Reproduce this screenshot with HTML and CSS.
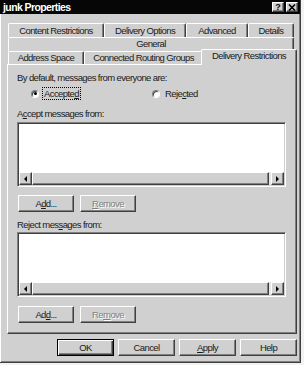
FILE: index.html
```html
<!DOCTYPE html>
<html>
<head>
<meta charset="utf-8">
<title>junk Properties</title>
<link rel="stylesheet" href="styles.css">
</head>
<body>
<div class="win">
  <div class="titlebar">
    <span class="title">junk Properties</span>
    <div class="tbtns">
      <span class="tbtn">?</span>
      <span class="tbtn">
        <svg width="8" height="7" viewBox="0 0 8 7"><path d="M1 0.5 L7 6.5 M7 0.5 L1 6.5" stroke="#000" stroke-width="1.6"/></svg>
      </span>
    </div>
  </div>
  <div class="frame">
    <div class="tabs">
      <div class="row row1">
        <div class="tab t-cr">Content Restrictions</div>
        <div class="tab t-do">Delivery Options</div>
        <div class="tab t-adv">Advanced</div>
        <div class="tab t-det">Details</div>
      </div>
      <div class="row row2">
        <div class="tab t-gen">General</div>
      </div>
      <div class="row row3">
        <div class="tab t-as">Address Space</div>
        <div class="tab t-crg">Connected Routing Groups</div>
        <div class="tab sel t-dr">Delivery Restrictions</div>
      </div>
    </div>
    <div class="panel">
      <div class="lbl l1">By default, messages from everyone are:</div>
      <div class="radios">
        <div class="radio first"><span class="rb on"></span><span class="rtext focus">Accepte<u>d</u></span></div>
        <div class="radio"><span class="rb"></span><span class="rtext">Reje<u>c</u>ted</span></div>
      </div>
      <div class="lbl l2">A<u>c</u>cept messages from:</div>
      <div class="list">
        <div class="list-body"></div>
        <div class="hscroll">
          <span class="sbtn"><span class="arr left"></span></span>
          <span class="thumb"></span>
          <span class="sbtn"><span class="arr right"></span></span>
        </div>
      </div>
      <div class="btnrow br1">
        <span class="btn small">A<u>d</u>d...</span>
        <span class="btn small disabled"><u>R</u>emove</span>
      </div>
      <div class="lbl l3">Reject mes<u>s</u>ages from:</div>
      <div class="list l-2">
        <div class="list-body"></div>
        <div class="hscroll">
          <span class="sbtn"><span class="arr left"></span></span>
          <span class="thumb"></span>
          <span class="sbtn"><span class="arr right"></span></span>
        </div>
      </div>
      <div class="btnrow br2">
        <span class="btn small">Ad<u>d</u>...</span>
        <span class="btn small disabled">Re<u>m</u>ove</span>
      </div>
    </div>
    <div class="footer">
      <span class="btn big default">OK</span>
      <span class="btn big">Cancel</span>
      <span class="btn big"><u>A</u>pply</span>
      <span class="btn big">Help</span>
    </div>
  </div>
</div>
</body>
</html>
```

FILE: styles.css
```css
* { box-sizing: border-box; }
html, body { margin: 0; padding: 0; }
body {
  width: 304px;
  height: 365px;
  overflow: hidden;
  background: #f2f2f2;
  font-family: "Liberation Sans", Arial, sans-serif;
  font-size: 9.5px;
  letter-spacing: -0.6px;
  color: #1a1a1a;
}
u { text-decoration: underline; text-underline-offset: 1px; }

.win {
  width: 301px;
  height: 363px;
  background: #d0d0d0;
  border-right: 1px solid #404040;
  border-bottom: 1px solid #404040;
  box-shadow: inset -1px -1px 0 #808080;
  display: flex;
  flex-direction: column;
}

.titlebar {
  height: 14px;
  background: #060606;
  display: flex;
  align-items: center;
  justify-content: space-between;
  padding: 0 2px 0 3px;
  flex-shrink: 0;
}
.title {
  color: #fff;
  font-weight: bold;
  font-size: 10.5px;
  letter-spacing: -0.6px;
  line-height: 14px;
}
.tbtns { display: flex; gap: 2px; }
.tbtn {
  width: 12px;
  height: 10px;
  background: #d0d0d0;
  border: 1px solid;
  border-color: #fff #404040 #404040 #fff;
  box-shadow: inset -1px -1px 0 #808080;
  display: flex;
  align-items: center;
  justify-content: center;
  font-weight: bold;
  font-size: 9px;
  letter-spacing: 0;
  line-height: 8px;
  color: #000;
}

.frame {
  flex: 1;
  border-left: 1px solid #fff;
  padding: 9px 3px 0 6px;
  display: flex;
  flex-direction: column;
}

.tabs { margin-left: 1px; width: 286px; }
.row { display: flex; }
.tab {
  flex-shrink: 0;
  background: #d0d0d0;
  border-top: 1px solid #fff;
  border-left: 1px solid #fff;
  border-right: 1px solid #404040;
  box-shadow: inset -1px 0 0 #808080;
  border-radius: 2px 2px 0 0;
  text-align: center;
  white-space: nowrap;
  overflow: hidden;
}
.row1 .tab { height: 14px; line-height: 13px; }
.row2 .tab { height: 14px; line-height: 12px; }
.row3 .tab { height: 13px; line-height: 12px; }
.t-cr { width: 96px; }
.t-do { width: 82px; }
.t-adv { width: 62px; }
.t-det { width: 46px; }
.t-gen { width: 286px; }
.t-as { width: 76px; }
.t-crg { width: 119px; }
.row3 .tab.sel {
  width: 96px;
  height: 16px;
  margin: -2px -3px -1px -2px;
  position: relative;
  z-index: 1;
  line-height: 12px;
}

.panel {
  width: 290px;
  height: 270px;
  border-top: 1px solid #fff;
  border-left: 1px solid #fff;
  border-right: 1px solid #404040;
  border-bottom: 1px solid #404040;
  box-shadow: inset -1px -1px 0 #808080;
  padding: 0 0 0 9px;
  display: flex;
  flex-direction: column;
}
.lbl { line-height: 12px; height: 12px; white-space: nowrap; }
.l1 { margin-top: 7px; }
.radios { display: flex; margin-top: 3px; height: 13px; align-items: center; padding-left: 14px; }
.radio { display: flex; align-items: center; }
.radio.first { width: 121px; }
.rb {
  width: 8px;
  height: 8px;
  border-radius: 50%;
  background: #fff;
  border: 1px solid;
  border-color: #808080 #fff #fff #808080;
  box-shadow: inset 1px 1px 0 #404040;
  display: flex;
  align-items: center;
  justify-content: center;
  margin-right: 3px;
}
.rb.on::after {
  content: "";
  width: 3px;
  height: 3px;
  border-radius: 50%;
  background: #000;
}
.rtext { line-height: 11px; padding: 0 1px; border: 1px solid transparent; }
.rtext.focus { border: 1px dotted #000; }

.l2 { margin-top: 8px; }
.list {
  width: 269px;
  height: 65px;
  margin-top: 2px;
  border: 1px solid;
  border-color: #808080 #fff #fff #808080;
  box-shadow: inset 1px 1px 0 #404040, inset -1px -1px 0 #d0d0d0;
  padding: 1px;
  display: flex;
  flex-direction: column;
}
.list-body { flex: 1; background: #fff; }
.hscroll {
  height: 13px;
  display: flex;
  background: #e6e6e6;
}
.sbtn, .thumb {
  background: #d0d0d0;
  border: 1px solid;
  border-color: #fff #404040 #404040 #fff;
  box-shadow: inset -1px -1px 0 #808080;
}
.sbtn {
  width: 13px;
  flex-shrink: 0;
  display: flex;
  align-items: center;
  justify-content: center;
}
.thumb { flex: 1; margin-right: 2px; }
.arr { width: 0; height: 0; border-top: 3px solid transparent; border-bottom: 3px solid transparent; }
.arr.left { border-right: 3px solid #000; }
.arr.right { border-left: 3px solid #000; }

.btnrow { display: flex; gap: 6px; padding-left: 1px; }
.br1 { margin-top: 8px; }
.br2 { margin-top: 9px; }
.l3 { margin-top: 7px; }
.l-2 { margin-top: 1px; }

.btn {
  height: 17px;
  background: #d0d0d0;
  border: 1px solid;
  border-color: #fff #404040 #404040 #fff;
  box-shadow: inset -1px -1px 0 #808080;
  text-align: center;
  line-height: 15px;
  white-space: nowrap;
}
.btn.small { width: 56px; }
.btn.disabled { color: #808080; text-shadow: 1px 1px 0 #fff; }
.btn.big { width: 57px; }
.btn.default {
  border-color: #000;
  box-shadow: inset 1px 1px 0 #fff, inset -1px -1px 0 #404040, inset -2px -2px 0 #808080;
}

.footer {
  display: flex;
  justify-content: flex-end;
  gap: 4px;
  margin-top: 5px;
  width: 290px;
}
```
